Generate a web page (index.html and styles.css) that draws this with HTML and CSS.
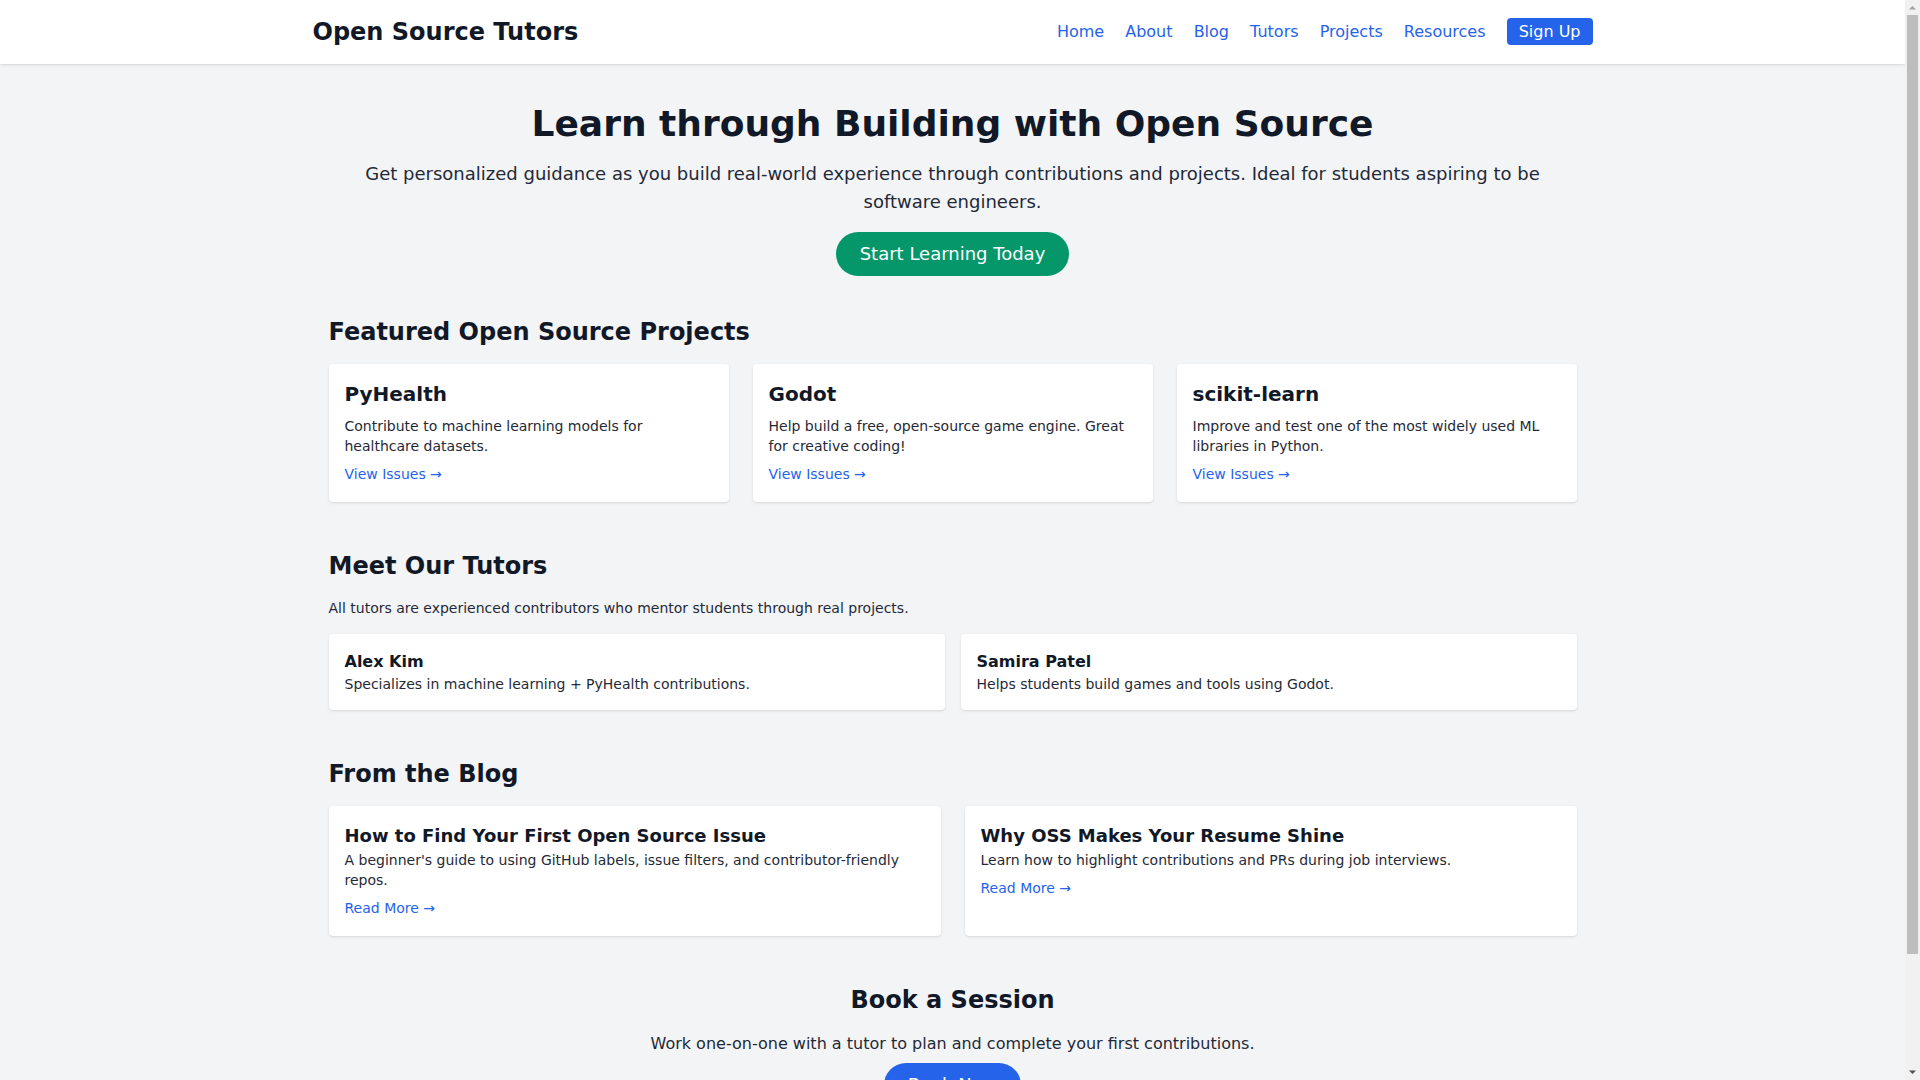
FILE: index.html
```html
<!DOCTYPE html>
<html lang="en">
<head>
<meta charset="utf-8">
<title>Open Source Tutors</title>
<link rel="stylesheet" href="styles.css">
</head>
<body>
<nav class="navbar">
  <div class="nav-inner">
    <div class="logo">Open Source Tutors</div>
    <div class="nav-links">
      <a href="#">Home</a>
      <a href="#">About</a>
      <a href="#">Blog</a>
      <a href="#">Tutors</a>
      <a href="#">Projects</a>
      <a href="#">Resources</a>
      <a href="#" class="btn-signup">Sign Up</a>
    </div>
  </div>
</nav>

<main class="container">
  <section class="hero">
    <h1>Learn through Building with Open Source</h1>
    <p>Get personalized guidance as you build real-world experience through contributions and projects. Ideal for students aspiring to be software engineers.</p>
    <div class="cta-row"><a href="#" class="btn-pill btn-green">Start Learning Today</a></div>
  </section>

  <section class="section">
    <h2>Featured Open Source Projects</h2>
    <div class="grid grid-3">
      <div class="card">
        <h3 class="card-title-lg">PyHealth</h3>
        <p class="card-text">Contribute to machine learning models for healthcare datasets.</p>
        <a href="#" class="card-link">View Issues →</a>
      </div>
      <div class="card">
        <h3 class="card-title-lg">Godot</h3>
        <p class="card-text">Help build a free, open-source game engine. Great for creative coding!</p>
        <a href="#" class="card-link">View Issues →</a>
      </div>
      <div class="card">
        <h3 class="card-title-lg">scikit-learn</h3>
        <p class="card-text">Improve and test one of the most widely used ML libraries in Python.</p>
        <a href="#" class="card-link">View Issues →</a>
      </div>
    </div>
  </section>

  <section class="section">
    <h2>Meet Our Tutors</h2>
    <p class="section-intro">All tutors are experienced contributors who mentor students through real projects.</p>
    <div class="grid grid-2 gap-sm">
      <div class="card">
        <h3 class="card-title-sm">Alex Kim</h3>
        <p class="card-text">Specializes in machine learning + PyHealth contributions.</p>
      </div>
      <div class="card">
        <h3 class="card-title-sm">Samira Patel</h3>
        <p class="card-text">Helps students build games and tools using Godot.</p>
      </div>
    </div>
  </section>

  <section class="section">
    <h2>From the Blog</h2>
    <div class="grid grid-2">
      <div class="card">
        <h3 class="card-title-md">How to Find Your First Open Source Issue</h3>
        <p class="card-text">A beginner's guide to using GitHub labels, issue filters, and contributor-friendly repos.</p>
        <a href="#" class="card-link">Read More →</a>
      </div>
      <div class="card">
        <h3 class="card-title-md">Why OSS Makes Your Resume Shine</h3>
        <p class="card-text">Learn how to highlight contributions and PRs during job interviews.</p>
        <a href="#" class="card-link">Read More →</a>
      </div>
    </div>
  </section>

  <section class="section booking">
    <h2>Book a Session</h2>
    <p class="booking-text">Work one-on-one with a tutor to plan and complete your first contributions.</p>
    <div class="cta-row cta-tight"><a href="#" class="btn-pill btn-blue">Book Now</a></div>
  </section>
</main>

<footer class="footer">© 2025 Open Source Tutors. All rights reserved.</footer>

<div class="scrollbar" aria-hidden="true">
  <div class="sb-arrow">
    <svg width="15" height="15" viewBox="0 0 15 15"><polygon points="4,9.5 7.5,6 11,9.5" fill="#a3a3a3"/></svg>
  </div>
  <div class="sb-thumb"></div>
  <div class="sb-space"></div>
  <div class="sb-arrow">
    <svg width="15" height="15" viewBox="0 0 15 15"><polygon points="4,5.5 11,5.5 7.5,9" fill="#505050"/></svg>
  </div>
</div>
</body>
</html>
```

FILE: styles.css
```css
* {
  box-sizing: border-box;
}

html {
  background: #f3f4f6;
}

body {
  margin: 0 15px 0 0;
  font-family: "DejaVu Sans", "Noto Sans", sans-serif;
  font-size: 16px;
  line-height: 24px;
  background: #f3f4f6;
  color: #1f2937;
}

a {
  text-decoration: none;
}

/* Navbar */
.navbar {
  background: #ffffff;
  box-shadow: 0 1px 3px 0 rgba(0, 0, 0, 0.1), 0 1px 2px -1px rgba(0, 0, 0, 0.1);
}

.nav-inner {
  max-width: 1280px;
  margin: 0 auto;
  padding: 16px 0;
  display: flex;
  justify-content: space-between;
  align-items: center;
}

.logo {
  font-size: 24px;
  line-height: 32px;
  font-weight: 700;
  color: #111827;
}

.nav-links {
  font-size: 16px;
  line-height: 24px;
}

.nav-links a {
  color: #2563eb;
}

.nav-links a + a {
  margin-left: 16px;
}

.nav-links a.btn-signup {
  background: #2563eb;
  color: #ffffff;
  padding: 4px 12px;
  border-radius: 4px;
}

/* Main container */
.container {
  max-width: 1280px;
  margin: 0 auto;
  padding: 0 16px;
}

/* Hero */
.hero {
  padding: 40px 0;
  text-align: center;
}

.hero h1 {
  margin: 0;
  font-size: 36px;
  line-height: 40px;
  font-weight: 700;
  color: #111827;
}

.hero p {
  margin: 16px 0 0;
  font-size: 18px;
  line-height: 28px;
}

.cta-row {
  margin-top: 16px;
}

.cta-tight {
  margin-top: 7px;
}

.btn-pill {
  display: inline-block;
  padding: 8px 24px;
  border-radius: 9999px;
  font-size: 18px;
  line-height: 28px;
  color: #ffffff;
}

.btn-green {
  background: #059669;
}

.btn-blue {
  background: #2563eb;
}

/* Sections */
.section {
  margin-bottom: 48px;
}

.section h2 {
  margin: 0 0 16px;
  font-size: 24px;
  line-height: 32px;
  font-weight: 700;
  color: #111827;
}

.section-intro {
  margin: 0 0 16px;
  font-size: 14px;
  line-height: 20px;
}

.grid {
  display: grid;
  gap: 24px;
}

.grid-3 {
  grid-template-columns: repeat(3, 1fr);
}

.grid-2 {
  grid-template-columns: repeat(2, 1fr);
}

.gap-sm {
  gap: 16px;
}

/* Cards */
.card {
  background: #ffffff;
  border-radius: 4px;
  box-shadow: 0 1px 3px 0 rgba(0, 0, 0, 0.1), 0 1px 2px -1px rgba(0, 0, 0, 0.1);
  padding: 16px;
}

.card h3 {
  margin: 0;
  font-weight: 700;
  color: #111827;
}

.card .card-title-lg {
  font-size: 20px;
  line-height: 28px;
  margin-bottom: 8px;
}

.card-title-md {
  font-size: 18px;
  line-height: 28px;
}

.card-title-sm {
  font-size: 16px;
  line-height: 24px;
}

.card-text {
  margin: 0;
  font-size: 14px;
  line-height: 20px;
}

.card-link {
  display: inline-block;
  margin-top: 8px;
  font-size: 14px;
  line-height: 20px;
  color: #2563eb;
}

/* Booking */
.booking {
  text-align: center;
}

.booking-text {
  margin: 0;
  font-size: 16px;
  line-height: 24px;
}

/* Footer */
.footer {
  padding: 16px 0;
  text-align: center;
  font-size: 14px;
  line-height: 20px;
  color: #6b7280;
}

/* Window scrollbar drawn over the right edge */
.scrollbar {
  position: fixed;
  top: 0;
  right: 0;
  width: 15px;
  height: 100vh;
  background: #f1f1f1;
  display: flex;
  flex-direction: column;
}

.sb-arrow {
  height: 15px;
  flex: none;
}

.sb-arrow svg {
  display: block;
}

.sb-thumb {
  flex: none;
  height: 939px;
  margin: 0 2px;
  background: #bdbdbd;
}

.sb-space {
  flex: 1;
}
```
